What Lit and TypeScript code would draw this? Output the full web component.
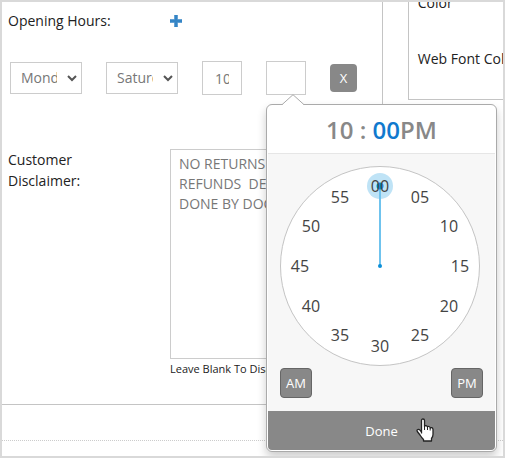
import { LitElement, html, css, svg } from "lit";
import { customElement, property, state } from "lit/decorators.js";

const pad = (n: number) => String(n).padStart(2, "0");

@customElement("time-picker")
class TimePicker extends LitElement {
  @property({ type: Number }) hour = 10;
  @property({ type: Number }) minute = 0;
  @state() private period = "PM";

  static styles = css`
    :host {
      display: block;
      box-sizing: border-box;
      width: 231px;
      padding: 1px;
      border: 1px solid #aaa;
      border-radius: 6px;
      background: #fff;
      box-shadow: 0 5px 10px rgba(0, 0, 0, 0.2);
      font: 14px/20px "Open Sans", sans-serif;
    }
    .arrow {
      position: absolute;
      top: -11px;
      left: 14px;
      display: block;
    }
    .title {
      margin: 0;
      padding: 8px 0 7px;
      border-bottom: 1px solid #e6e6e6;
      font-size: 24px;
      line-height: 32px;
      font-weight: 600;
      text-align: center;
      color: #888;
    }
    .active {
      color: #1179ce;
    }
    .body {
      padding: 12px 12px 13px;
      background: #f7f7f7;
    }
    .clock {
      display: block;
      width: 200px;
      height: 200px;
    }
    .tick {
      font-size: 16px;
      fill: #444;
      text-anchor: middle;
      cursor: pointer;
    }
    .periods {
      display: flex;
      justify-content: space-between;
      margin-top: 2px;
    }
    button {
      font: inherit;
      color: #fff;
      background: #888;
      cursor: pointer;
    }
    .period {
      width: 32px;
      height: 30px;
      padding: 0;
      border: 1px solid #666;
      border-radius: 4px;
      font-size: 13px;
    }
    .done {
      display: block;
      width: 100%;
      height: 39px;
      border: 0;
      border-radius: 0 0 4px 4px;
      font-size: 13px;
    }
  `;

  render() {
    const angle = (this.minute / 30) * Math.PI;
    const hx = 100 + 80 * Math.sin(angle);
    const hy = 100 - 80 * Math.cos(angle);
    return html`
      <svg class="arrow" width="24" height="11" viewBox="0 0 24 11">
        <path d="M1 11 L12 0.7 L23 11Z" fill="#fff" />
        <path d="M1 10.7 L12 0.7 L23 10.7" fill="none" stroke="#aaa" />
      </svg>
      <h3 class="title">${this.hour} : <span class="active">${pad(this.minute)}</span>${this.period}</h3>
      <div class="body">
        <svg class="clock" viewBox="0 0 200 200" role="group" aria-label="Minutes">
          <circle cx="100" cy="100" r="99.5" fill="#fff" stroke="#c4c4c4" />
          <circle cx=${hx} cy=${hy} r="13" fill="#bfe3f6" />
          <line x1="100" y1="100" x2=${hx} y2=${hy} stroke="#6fc3ee" stroke-width="2" />
          <circle cx=${hx} cy=${hy} r="3.5" fill="#0b8fd8" />
          <circle cx="100" cy="100" r="2" fill="#0b8fd8" />
          ${Array.from({ length: 12 }, (_, i) => {
            const a = (i / 6) * Math.PI;
            return svg`<text class="tick"
              x=${Math.round(100 + 80 * Math.sin(a))}
              y=${Math.round(106 - 80 * Math.cos(a))}
              @click=${() => (this.minute = i * 5)}>${pad(i * 5)}</text>`;
          })}
        </svg>
        <div class="periods">
          ${["AM", "PM"].map(
            (p) => html`<button class="period" type="button" @click=${() => (this.period = p)}>${p}</button>`
          )}
        </div>
      </div>
      <button class="done" type="button">Done</button>
    `;
  }
}

@customElement("app-root")
class AppRoot extends LitElement {
  static styles = css`
    :host {
      display: block;
      font: 14px/20px "Open Sans", sans-serif;
      color: #222;
    }
    * {
      box-sizing: border-box;
    }
    .page {
      min-height: 100vh;
      border: 2px solid #d9d9d9;
      background: #fff;
      overflow: hidden;
    }
    .columns {
      display: grid;
      grid-template-columns: minmax(0, 4fr) minmax(0, 1fr);
      gap: 25px;
      align-items: start;
    }
    .form {
      padding: 9px 12px 25px 6px;
      border: solid #c4c4c4;
      border-width: 0 1px 1px 0;
    }
    .row {
      display: grid;
      grid-template-columns: 162px minmax(0, 1fr);
    }
    .add {
      display: flex;
      align-items: center;
      justify-self: start;
      padding: 0;
      border: 0;
      background: none;
      cursor: pointer;
    }
    .hours {
      display: flex;
      align-items: center;
      gap: 24px;
      margin: 30px 0 54px 2px;
    }
    .pick {
      display: grid;
      flex: none;
      width: 72px;
      align-items: center;
    }
    .pick > * {
      grid-area: 1 / 1;
    }
    .chevron {
      justify-self: end;
      margin-right: 5px;
      pointer-events: none;
    }
    select,
    input,
    textarea {
      margin: 0;
      border: 1px solid #ccc;
      border-radius: 0;
      background: #fff;
      font: inherit;
      color: #777;
    }
    select {
      width: 100%;
      height: 32px;
      padding: 0 24px 0 10px;
      appearance: none;
    }
    input {
      display: block;
      width: 40px;
      height: 34px;
      padding: 0 12px;
    }
    .anchor {
      position: relative;
    }
    time-picker {
      position: absolute;
      z-index: 1;
      top: 43px;
      left: 0;
    }
    .remove {
      flex: none;
      width: 27px;
      height: 28px;
      padding: 0;
      border: 0;
      border-radius: 4px;
      background: #888;
      font: inherit;
      font-size: 13px;
      color: #fff;
    }
    .caption {
      max-width: 90px;
      line-height: 21px;
    }
    textarea {
      display: block;
      width: 100%;
      height: 210px;
      padding: 4px 8px;
      resize: none;
      overflow: hidden;
      white-space: pre;
    }
    .hint {
      margin: 0;
      font-size: 11px;
      white-space: nowrap;
    }
    .side {
      margin-top: -9px;
      padding: 0 0 30px 9px;
      border: solid #c4c4c4;
      border-width: 0 0 1px 1px;
      white-space: nowrap;
    }
    .side p {
      margin: 0;
    }
    .side p + p {
      margin-top: 36px;
    }
    .divider {
      margin: 35px 0 0;
      border: 0;
      border-top: 1px dotted #ccc;
    }
    .pointer {
      position: absolute;
      z-index: 2;
      top: 357px;
      left: 150px;
      pointer-events: none;
    }
  `;

  private select(value: string, label: string) {
    const days = ["Monday", "Tuesday", "Wednesday", "Thursday", "Friday", "Saturday", "Sunday"];
    return html`<div class="pick">
      <select aria-label=${label}>
        ${days.map((d) => html`<option ?selected=${d === value}>${d}</option>`)}
      </select>
      <svg class="chevron" width="10" height="7" viewBox="0 0 10 7">
        <path d="M1 1 L5 5 L9 1" fill="none" stroke="#555" stroke-width="2" />
      </svg>
    </div>`;
  }

  render() {
    return html`
      <main class="page">
        <div class="columns">
          <section class="form">
            <div class="row">
              <span>Opening Hours:</span>
              <button class="add" type="button" aria-label="Add hours">
                <svg width="12" height="12" viewBox="0 0 12 12">
                  <path d="M4.500 0h3v4.500H12v3H7.500V12h-3V7.500H0v-3h4.500z" fill="#3585c6" stroke="#3585c6" stroke-width="0.500" />
                </svg>
              </button>
            </div>
            <div class="hours">
              ${this.select("Monday", "From day")} ${this.select("Saturday", "To day")}
              <input type="text" aria-label="Opens" value="10:00AM" />
              <div class="anchor">
                <input type="text" aria-label="Closes" />
                <time-picker></time-picker>
                <svg class="pointer" width="18" height="24" viewBox="0 0 18 24">
                  <path
                    d="M5.500 15.500V2.500Q5.500 1 7 1T8.500 2.500V8.500Q9 7.500 10 7.700T11.500 9Q12 8.200 13 8.500T14.200 10Q14.800 9.300 15.800 9.700T17 11.300V16.500Q17 18.500 15.500 20.500V23H7.500V21.500Q5.500 19.500 4 17L1.300 13.500Q0.500 12 1.800 11.500T4 12.200L5.500 14"
                    fill="#fff" stroke="#222" stroke-width="1.300" stroke-linejoin="round" />
                  <path d="M8.500 8.500V12M11.500 9V12M14.200 10V12.500" fill="none" stroke="#222" />
                </svg>
              </div>
              <button class="remove" type="button" aria-label="Remove hours">X</button>
            </div>
            <div class="row">
              <label class="caption" for="disclaimer">Customer Disclaimer:</label>
              <div>
                <textarea id="disclaimer" .value=${"NO RETURNS OR\nREFUNDS  DEALS\nDONE BY DOC"}></textarea>
                <p class="hint">Leave Blank To Disable</p>
              </div>
            </div>
          </section>
          <aside class="side">
            <p>Color</p>
            <p>Web Font Color</p>
          </aside>
        </div>
        <hr class="divider" />
      </main>
    `;
  }
}
